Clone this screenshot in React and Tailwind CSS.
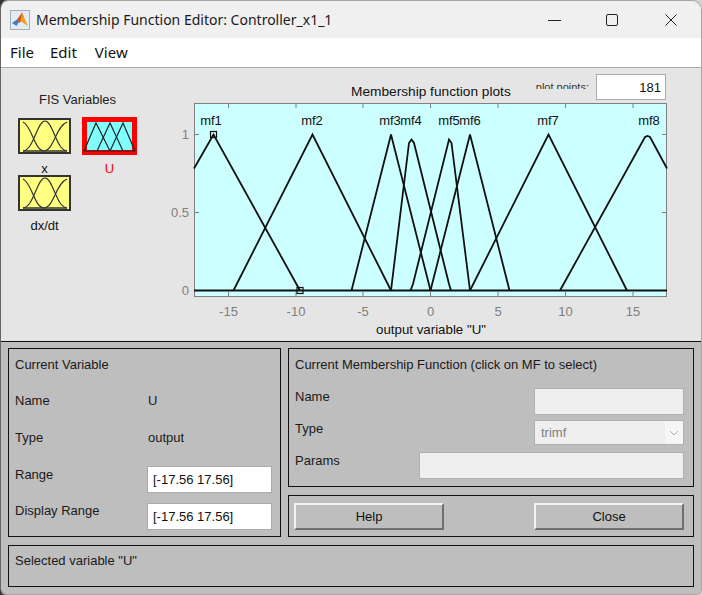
import React from 'react';

const FONT = "font-['Liberation_Sans',Arial,sans-serif]";

const xTicks = [
  { x: 228.5, label: '-15' },
  { x: 296, label: '-10' },
  { x: 363, label: '-5' },
  { x: 430.5, label: '0' },
  { x: 498, label: '5' },
  { x: 565.5, label: '10' },
  { x: 633, label: '15' },
];

const yTicks = [
  { y: 134.5, label: '1' },
  { y: 212.5, label: '0.5' },
  { y: 290.5, label: '0' },
];

const mfCurves = [
  '194,168.5 213.5,134.5 300,290.5',
  '233.5,290.5 312.5,134.5 391,290.5',
  '351.5,290.5 391,134.5 430.5,290.5',
  '391,290.5 409,143 411.5,139.5 414,143 449,284 451,290.5',
  '410.5,290.5 413,284 449,139.5 451.5,143 470,290.5',
  '430.5,290.5 470,134.5 509.5,290.5',
  '470,290.5 548.5,134.5 627,290.5',
  '560,290.5 645,137 647.5,136 650,137 667,168.5',
];

const mfLabels = [
  { x: 211, label: 'mf1' },
  { x: 312, label: 'mf2' },
  { x: 390, label: 'mf3' },
  { x: 411, label: 'mf4' },
  { x: 449, label: 'mf5' },
  { x: 470, label: 'mf6' },
  { x: 548, label: 'mf7' },
  { x: 649, label: 'mf8' },
];

const MatlabLogo = () => (
  <svg width="20" height="20" viewBox="0 0 20 20">
    <rect x="0.5" y="0.5" width="19" height="19" fill="#e3ebf4" stroke="#a5adb6" />
    <polygon points="2,13 7,9.5 9.5,11 6.5,16" fill="#3f7fc4" />
    <polygon points="7,9.5 12,2.5 14,7 9.5,13" fill="#d9541e" />
    <polygon points="12,2.5 18,16 14,13.5 10.5,11" fill="#f0a020" />
  </svg>
);

const MfIcon = ({ color, selected }) => {
  if (selected) {
    return (
      <div className="w-[55px] h-[38px] border-[5px] border-[#ff0000] bg-[#80ffff]">
        <svg width="45" height="28" viewBox="0 0 45 28" className="block overflow-visible">
          <polyline points="-3,29 9,1 23,29" fill="none" stroke="#222" strokeWidth="1.2" />
          <polyline points="10,29 23,1 36,29" fill="none" stroke="#222" strokeWidth="1.2" />
          <polyline points="23,29 36,1 48,29" fill="none" stroke="#222" strokeWidth="1.2" />
          <line x1="-3" y1="29" x2="48" y2="29" stroke="#222" strokeWidth="1.2" />
        </svg>
      </div>
    );
  }
  return (
    <div className={`w-[53px] h-[36px] border-2 border-[#333] ${color}`}>
      <svg width="49" height="32" viewBox="0 0 49 32" className="block">
        <path d="M3 2 C12 6 14 30 24 31" fill="none" stroke="#333" strokeWidth="1.2" />
        <path d="M3 31 C14 30 17 1 25 1 C33 1 36 30 47 31" fill="none" stroke="#333" strokeWidth="1.2" />
        <path d="M24 31 C34 30 36 6 47 2" fill="none" stroke="#333" strokeWidth="1.2" />
        <line x1="3" y1="31" x2="47" y2="31" stroke="#333" strokeWidth="1.5" />
      </svg>
    </div>
  );
};

const PlotChart = () => (
  <svg width="516" height="241" viewBox="161 100 516 241" className="block">
    <rect x="194.5" y="103.5" width="472" height="193" fill="#ccffff" stroke="#808080" />
    {xTicks.map((t) => (
      <g key={t.label}>
        <line x1={t.x} y1="103" x2={t.x} y2="108" stroke="#808080" />
        <line x1={t.x} y1="292" x2={t.x} y2="297" stroke="#808080" />
        <text x={t.x} y="316" textAnchor="middle" fontSize="13" fill="#808080">{t.label}</text>
      </g>
    ))}
    {yTicks.map((t) => (
      <g key={t.label}>
        <line x1="194" y1={t.y} x2="199" y2={t.y} stroke="#808080" />
        <line x1="662" y1={t.y} x2="667" y2={t.y} stroke="#808080" />
        <text x="189" y={t.y + 4.5} textAnchor="end" fontSize="13" fill="#808080">{t.label}</text>
      </g>
    ))}
    <line x1="194" y1="290.5" x2="667" y2="290.5" stroke="#111" strokeWidth="2" />
    {mfCurves.map((points) => (
      <polyline key={points} points={points} fill="none" stroke="#111" strokeWidth="1.8" />
    ))}
    <rect x="210.5" y="131.5" width="6" height="6" fill="none" stroke="#111" strokeWidth="1.2" />
    <rect x="297" y="287.5" width="6" height="6" fill="none" stroke="#111" strokeWidth="1.2" />
    {mfLabels.map((m) => (
      <text key={m.label} x={m.x} y="125" textAnchor="middle" fontSize="13" fill="#111">{m.label}</text>
    ))}
    <text x="431" y="334" textAnchor="middle" fontSize="13.3" fill="#111">output variable "U"</text>
  </svg>
);

const Panel = ({ className, children }) => (
  <div className={`border border-[#111] ${className}`}>{children}</div>
);

const TextBox = ({ value, className }) => (
  <input
    readOnly
    value={value}
    className={`border border-[#aaaaaa] bg-white px-[5px] text-[13px] text-[#111] outline-none ${className}`}
  />
);

const Bevel = ({ children }) => (
  <button
    type="button"
    className="w-[150px] h-[27px] border-2 border-t-[#f4f4f4] border-l-[#f4f4f4] border-r-[#6f6f6f] border-b-[#6f6f6f] bg-[#bebebe] text-[13px] text-[#111]"
  >
    {children}
  </button>
);

export default function App() {
  return (
    <div className={`w-[702px] h-[595px] bg-[linear-gradient(to_right,#333333_50%,#d4d4d4_50%)] ${FONT}`}>
      <div className="w-full h-full flex flex-col rounded-tr-[10px] rounded-tl-[8px] rounded-b-[6px] overflow-hidden border border-[#a6a6a6] border-l-[#666666]">
        {/* title bar */}
        <div className="h-[37px] shrink-0 flex items-center bg-[#f0f0f0] pl-[9px] pr-[24px]">
          <MatlabLogo />
          <span className="ml-[6px] text-[14px] text-[#1a1a1a] font-['Noto_Sans',sans-serif]">
            Membership Function Editor: Controller_x1_1
          </span>
          <div className="ml-auto flex items-center">
            <svg width="13" height="12" viewBox="0 0 13 12"><line x1="0" y1="6.5" x2="13" y2="6.5" stroke="#222" /></svg>
            <svg className="ml-[45px]" width="12" height="12" viewBox="0 0 12 12"><rect x="0.5" y="0.5" width="11" height="11" rx="1.5" fill="none" stroke="#222" /></svg>
            <svg className="ml-[47px]" width="12" height="12" viewBox="0 0 12 12"><path d="M0.5 0.5 L11.5 11.5 M11.5 0.5 L0.5 11.5" stroke="#222" /></svg>
          </div>
        </div>

        {/* menu */}
        <div className="h-[30px] shrink-0 flex items-center bg-white border-b border-[#a9a9a9] pl-[9px] text-[15px] text-[#111] font-['Noto_Sans',sans-serif]">
          <span>File</span>
          <span className="ml-[16px]">Edit</span>
          <span className="ml-[18px]">View</span>
        </div>

        {/* plots area */}
        <div className="h-[274px] shrink-0 flex bg-[#e5e5e5] border-b border-[#111]">
          <div className="w-[160px] shrink-0 pl-[17px] pt-[24px]">
            <div className="w-[119px] text-center text-[13px] leading-[15px] text-[#222]">FIS Variables</div>
            <div className="mt-[10px] flex items-start gap-[11px]">
              <div className="w-[53px] flex flex-col items-center">
                <div className="mt-px"><MfIcon color="bg-[#ffff80]" /></div>
                <span className="mt-[7px] text-[13px] leading-[15px] text-[#111]">x</span>
              </div>
              <div className="w-[55px] flex flex-col items-center">
                <MfIcon selected />
                <span className="mt-[6px] text-[13px] leading-[15px] text-[#ff0000]">U</span>
              </div>
            </div>
            <div className="w-[53px] flex flex-col items-center">
              <div className="-mt-px"><MfIcon color="bg-[#ffff80]" /></div>
              <span className="mt-[7px] text-[13px] leading-[15px] text-[#111]">dx/dt</span>
            </div>
          </div>
          <div className="flex-1 flex flex-col">
            <div className="h-[32px] flex items-start">
              <span className="ml-[190px] mt-[16px] text-[13.7px] leading-[15px] text-[#111] whitespace-nowrap">Membership function plots</span>
              <div className="ml-[25px] mt-[13px] h-[8px] overflow-hidden text-[11px] leading-[12px] text-[#333] whitespace-nowrap">plot points:</div>
              <input
                readOnly
                value="181"
                className="ml-[7px] mt-[6px] w-[70px] h-[26px] border border-[#aaaaaa] bg-white pr-[4px] text-right text-[13px] text-[#111] outline-none"
              />
            </div>
            <PlotChart />
          </div>
        </div>

        {/* lower controls */}
        <div className="flex-1 flex flex-col gap-[8px] bg-[#bebebe] pl-[7px] pr-[7px] pt-[6px] text-[13px] leading-[15px] text-[#1a1a1a]">
          <div className="flex gap-[7px] h-[189px]">
            <Panel className="w-[273px] pl-[6px] pt-[8px]">
              <div className="h-[36px]">Current Variable</div>
              <div className="h-[37px] flex"><span className="w-[133px]">Name</span><span>U</span></div>
              <div className="h-[37px] flex"><span className="w-[133px]">Type</span><span>output</span></div>
              <div className="h-[36px] flex"><span className="w-[132px]">Range</span><TextBox value="[-17.56 17.56]" className="-mt-px w-[125px] h-[27px]" /></div>
              <div className="flex"><span className="w-[132px]">Display Range</span><TextBox value="[-17.56 17.56]" className="w-[125px] h-[27px]" /></div>
            </Panel>
            <div className="w-[406px] flex flex-col gap-[8px]">
              <Panel className="h-[139px] pl-[6px] pr-[9px] pt-[8px]">
                <div className="h-[31px]">Current Membership Function (click on MF to select)</div>
                <div className="flex justify-between">
                  <span className="pt-[1px]">Name</span>
                  <div className="w-[150px] h-[27px] border border-[#b0b0b0] bg-[#efefef]" />
                </div>
                <div className="mt-[5px] flex justify-between">
                  <span className="pt-px">Type</span>
                  <div className="w-[150px] h-[25px] flex border border-[#b0b0b0] bg-[#efefef] items-center text-[#808080]">
                    <span className="flex-1 pl-[6px]">trimf</span>
                    <div className="w-[18px] h-full flex items-center justify-center bg-[#f6f6f6]">
                      <svg width="10" height="6" viewBox="0 0 10 6"><path d="M1 1 L5 5 L9 1" fill="none" stroke="#b0b0b0" /></svg>
                    </div>
                  </div>
                </div>
                <div className="mt-[7px] flex justify-between">
                  <span className="pt-px">Params</span>
                  <div className="w-[265px] h-[27px] border border-[#b0b0b0] bg-[#efefef]" />
                </div>
              </Panel>
              <Panel className="h-[42px] flex items-center justify-between pl-[5px] pr-[9px]">
                <Bevel>Help</Bevel>
                <Bevel>Close</Bevel>
              </Panel>
            </div>
          </div>
          <Panel className="h-[42px] pl-[6px] pt-[7px]">Selected variable "U"</Panel>
        </div>
      </div>
    </div>
  );
}
